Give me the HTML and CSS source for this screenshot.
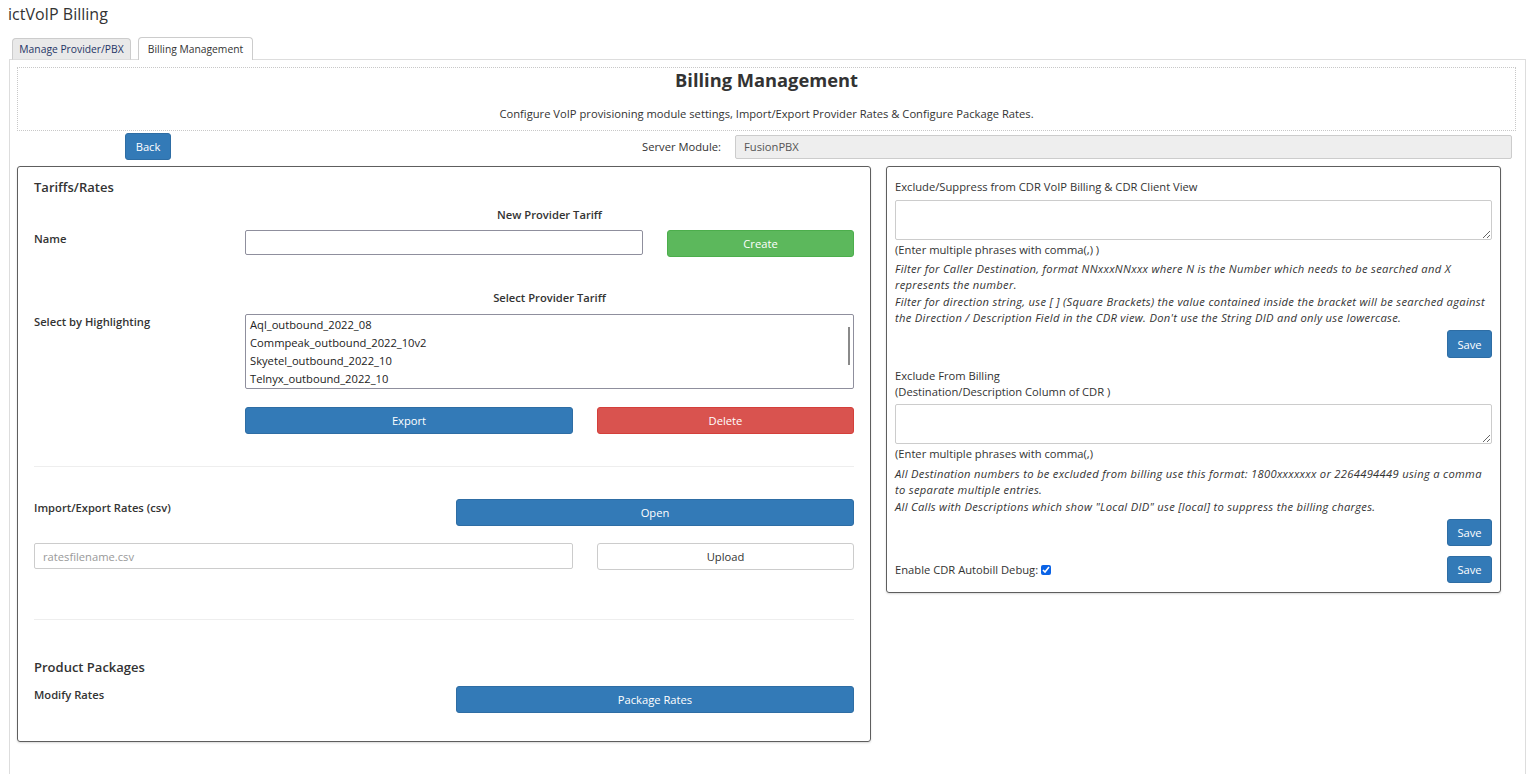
FILE: index.html
```html
<!DOCTYPE html>
<html>
<head>
<meta charset="utf-8">
<title>ictVoIP Billing</title>
<link rel="stylesheet" href="styles.css">
</head>
<body>
<div class="app-title">ictVoIP Billing</div>
<div class="tabs">
  <div class="tab tab-inactive">Manage Provider/PBX</div>
  <div class="tab tab-active">Billing Management</div>
</div>
<div class="tab-panel">
  <div class="page-header">
    <div class="page-title">Billing Management</div>
    <div class="page-sub">Configure VoIP provisioning module settings, Import/Export Provider Rates &amp; Configure Package Rates.</div>
  </div>
  <div class="server-row">
    <button class="btn btn-blue btn-back">Back</button>
    <div class="server-label">Server Module:</div>
    <div class="server-input">FusionPBX</div>
  </div>
  <div class="panels">
    <div class="box box-left">
      <div class="box-heading">Tariffs/Rates</div>
      <div class="sub-heading sh-new">New Provider Tariff</div>
      <div class="row row-name">
        <div class="lbl">Name</div>
        <input class="field field-name" type="text">
        <button class="btn btn-green">Create</button>
      </div>
      <div class="sub-heading sh-select">Select Provider Tariff</div>
      <div class="row row-select">
        <div class="lbl">Select by Highlighting</div>
        <div class="listbox">
          <div class="opt">Aql_outbound_2022_08</div>
          <div class="opt">Commpeak_outbound_2022_10v2</div>
          <div class="opt">Skyetel_outbound_2022_10</div>
          <div class="opt">Telnyx_outbound_2022_10</div>
          <div class="thumb"></div>
        </div>
      </div>
      <div class="row row-actions">
        <div class="lbl"></div>
        <button class="btn btn-blue btn-export">Export</button>
        <button class="btn btn-red btn-delete">Delete</button>
      </div>
      <div class="sep sep-1"></div>
      <div class="row row-import">
        <div class="lbl lbl-wide">Import/Export Rates (csv)</div>
        <button class="btn btn-blue btn-wide">Open</button>
      </div>
      <div class="row row-upload">
        <input class="field field-file" type="text" placeholder="ratesfilename.csv">
        <button class="btn btn-white btn-upload">Upload</button>
      </div>
      <div class="sep sep-2"></div>
      <div class="box-heading bh-packages">Product Packages</div>
      <div class="row row-modify">
        <div class="lbl lbl-wide">Modify Rates</div>
        <button class="btn btn-blue btn-wide">Package Rates</button>
      </div>
    </div>
    <div class="box box-right">
      <div class="txt t-first">Exclude/Suppress from CDR VoIP Billing &amp; CDR Client View</div>
      <textarea class="area area-1"></textarea>
      <div class="txt t-hint">(Enter multiple phrases with comma(,) )</div>
      <div class="note n-first">Filter for Caller Destination, format NNxxxNNxxx where N is the Number which needs to be searched and X represents the number.<br>Filter for direction string, use [ ] (Square Brackets) the value contained inside the bracket will be searched against the Direction / Description Field in the CDR view. Don't use the String DID and only use lowercase.</div>
      <div class="save-row s-1"><button class="btn btn-blue btn-save">Save</button></div>
      <div class="txt t-second">Exclude From Billing<br>(Destination/Description Column of CDR )</div>
      <textarea class="area area-2"></textarea>
      <div class="txt t-hint">(Enter multiple phrases with comma(,)</div>
      <div class="note n-second">All Destination numbers to be excluded from billing use this format: 1800xxxxxxx or 2264494449 using a comma to separate multiple entries.<br>All Calls with Descriptions which show "Local DID" use [local] to suppress the billing charges.</div>
      <div class="save-row s-2"><button class="btn btn-blue btn-save">Save</button></div>
      <div class="debug-row">
        <label class="txt debug-label">Enable CDR Autobill Debug: <input class="chk" type="checkbox" checked></label>
        <button class="btn btn-blue btn-save">Save</button>
      </div>
    </div>
  </div>
</div>
</body>
</html>
```
FILE: styles.css
```css
* { box-sizing: border-box; }
html, body { margin: 0; padding: 0; background: #fff; }
body {
  font-family: "Open Sans", "Liberation Sans", sans-serif;
  font-size: 11.2px;
  color: #333;
  width: 1530px;
  height: 774px;
  overflow: hidden;
}
.app-title {
  font-size: 16px;
  line-height: 24px;
  padding: 2px 0 0 8px;
  height: 37px;
  color: #333;
}
.tabs {
  display: flex;
  align-items: flex-end;
  gap: 7px;
  padding-left: 12px;
  height: 23px;
  margin-bottom: -1px;
  position: relative;
  z-index: 2;
}
.tab {
  font-size: 10.3px;
  text-align: center;
  border: 1px solid #ccc;
  border-radius: 4px 4px 0 0;
}
.tab-inactive {
  width: 119px;
  height: 22px;
  line-height: 20px;
  background: #e9e9e9;
  color: #1f3566;
  border-bottom-color: #ddd;
}
.tab-active {
  width: 115px;
  height: 23px;
  line-height: 22px;
  background: #fff;
  border-bottom: none;
  color: #333;
}
.tab-panel {
  margin-left: 9px;
  width: 1517px;
  height: 720px;
  border: 1px solid #ddd;
  border-bottom: none;
  padding: 7px 9px 0 7px;
}
.page-header {
  border: 1px dotted #c8c8c8;
  height: 64px;
  text-align: center;
}
.page-title {
  font-size: 18.3px;
  font-weight: 700;
  line-height: 24px;
  color: #333;
}
.page-sub {
  margin-top: 14px;
  line-height: 16px;
}
.server-row {
  display: flex;
  align-items: center;
  margin-top: 2px;
  height: 27px;
  padding-left: 108px;
}
.btn {
  font-family: inherit;
  font-size: 11.2px;
  border-radius: 3px;
  border: 1px solid transparent;
  height: 27px;
  padding: 0;
  color: #fff;
  cursor: pointer;
}
.btn-blue { background: #337ab7; border-color: #2e6da4; }
.btn-green { background: #5cb85c; border-color: #4cae4c; }
.btn-red { background: #d9534f; border-color: #d43f3a; }
.btn-white { background: #fff; border-color: #ccc; color: #333; }
.btn-back { width: 46px; }
.server-label {
  flex: 1;
  text-align: right;
  padding-right: 14px;
  line-height: 16px;
}
.server-input {
  width: 777px;
  height: 24px;
  margin-right: 4px;
  background: #eee;
  border: 1px solid #ccc;
  border-radius: 2px;
  padding-left: 8px;
  line-height: 22px;
  color: #555;
}
.panels {
  display: flex;
  align-items: flex-start;
  gap: 15px;
  margin-top: 6px;
}
.box {
  border: 1px solid #5e5e5e;
  border-radius: 3px;
  box-shadow: 0 1px 2px rgba(0,0,0,0.15);
}
.box-left {
  width: 854px;
  height: 576px;
  padding: 10px 16px 0 16px;
}
.box-right {
  width: 615px;
  height: 427px;
  padding: 12px 8px 0 8px;
}
.box-heading {
  font-size: 13px;
  font-weight: 600;
  line-height: 20px;
  color: #333;
}
.sub-heading {
  font-weight: 600;
  line-height: 16px;
  padding-left: 211px;
  text-align: center;
}
.sh-new { margin-top: 10px; }
.sh-select { margin-top: 33px; }
.row { display: flex; align-items: flex-start; }
.lbl {
  width: 211px;
  flex-shrink: 0;
  font-weight: 600;
  line-height: 16px;
  padding-top: 1px;
}
.lbl-wide { width: 422px; }
.row-name { margin-top: 7px; }
.field {
  font-family: inherit;
  font-size: 11.2px;
  height: 25px;
  border: 1px solid #8f8f9d;
  border-radius: 2px;
  padding: 0 8px;
  color: #333;
}
.field-name { width: 398px; margin-right: 24px; }
.btn-green { width: 187px; }
.row-select { margin-top: 8px; }
.row-select .lbl { padding-top: 0; }
.listbox {
  position: relative;
  width: 609px;
  height: 75px;
  border: 1px solid #8f8f9d;
  border-radius: 2px;
  padding: 1px 4px 0;
  overflow: hidden;
}
.opt { line-height: 18px; height: 18px; white-space: nowrap; color: #222; }
.thumb {
  position: absolute;
  right: 3px;
  top: 12px;
  width: 2px;
  height: 38px;
  background: #8a8a8a;
}
.row-actions { margin-top: 18px; }
.btn-export { width: 328px; margin-right: 24px; height: 27px; }
.btn-delete { width: 257px; height: 27px; }
.sep { height: 1px; background: #eee; }
.sep-1 { margin-top: 32px; }
.row-import { margin-top: 32px; }
.btn-wide { width: 398px; }
.row-upload { margin-top: 17px; }
.field-file {
  width: 539px;
  margin-right: 24px;
  border-color: #ccc;
  height: 26px;
}
.field-file::placeholder { color: #999; }
.btn-upload { width: 257px; height: 27px; }
.sep-2 { margin-top: 49px; }
.bh-packages { margin-top: 37px; }
.row-modify { margin-top: 9px; }
.txt { line-height: 16px; }
.area {
  display: block;
  width: 597px;
  height: 40px;
  border: 1px solid #ccc;
  border-radius: 2px;
  font-family: inherit;
  font-size: 11px;
}
.area-1 { margin-top: 5px; }
.area-2 { margin-top: 4px; }
.t-hint { margin-top: 2px; }
.note {
  font-style: italic;
  line-height: 16.3px;
  letter-spacing: 0.3px;
}
.n-first { margin-top: 3px; }
.n-second { margin-top: 4px; }
.save-row { display: flex; justify-content: flex-end; margin-top: 4px; }
.s-1 .btn-save { height: 28px; }
.btn-save { width: 45px; }
.t-second { margin-top: 10px; }
.debug-row {
  display: flex;
  align-items: center;
  justify-content: space-between;
  margin-top: 10px;
}
.debug-label { display: flex; align-items: center; gap: 3px; }
.chk {
  width: 10px;
  height: 10px;
  margin: 0;
  accent-color: #0b63e6;
}
```
